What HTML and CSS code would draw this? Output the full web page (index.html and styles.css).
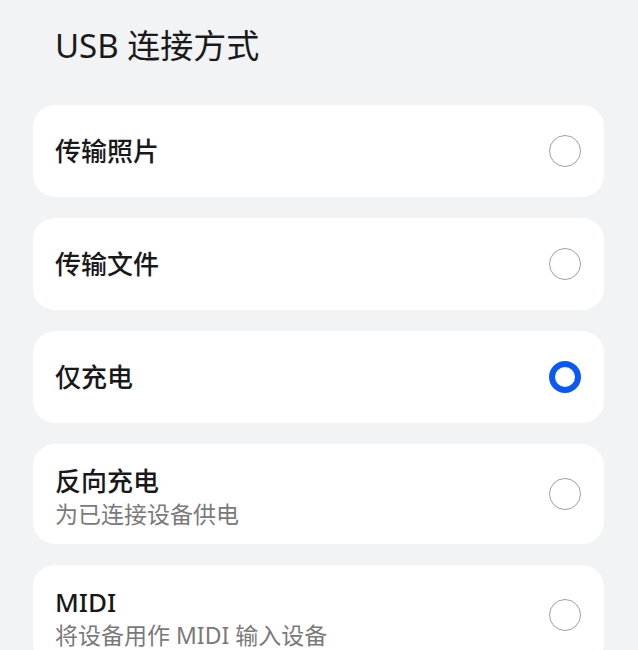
FILE: index.html
```html
<!DOCTYPE html>
<html lang="zh-CN">
<head>
  <meta charset="UTF-8">
  <meta name="viewport" content="width=device-width, initial-scale=1.0">
  <title>USB 连接方式</title>
  <link rel="stylesheet" href="styles.css">
</head>
<body>
  <div class="page">
    <h1 class="page-title">USB 连接方式</h1>
    <div class="option-list">
      <div class="option">
        <div class="option-text">
          <div class="option-name">传输照片</div>
        </div>
        <span class="radio"></span>
      </div>
      <div class="option">
        <div class="option-text">
          <div class="option-name">传输文件</div>
        </div>
        <span class="radio"></span>
      </div>
      <div class="option">
        <div class="option-text">
          <div class="option-name">仅充电</div>
        </div>
        <span class="radio checked"></span>
      </div>
      <div class="option two-line">
        <div class="option-text">
          <div class="option-name">反向充电</div>
          <div class="option-desc">为已连接设备供电</div>
        </div>
        <span class="radio"></span>
      </div>
      <div class="option two-line">
        <div class="option-text">
          <div class="option-name">MIDI</div>
          <div class="option-desc">将设备用作 MIDI 输入设备</div>
        </div>
        <span class="radio"></span>
      </div>
    </div>
  </div>
</body>
</html>
```

FILE: styles.css
```css
body {
  margin: 0;
  padding: 0;
  background-color: #f1f3f5;
  font-family: "Noto Sans", "Noto Sans CJK SC", sans-serif;
  color: #191919;
}

.page {
  padding: 24px 34px 0 33px;
  height: 650px;
  overflow: hidden;
  box-sizing: border-box;
}

.page-title {
  margin: 0 0 37px 0;
  padding-left: 22px;
  font-size: 33px;
  font-weight: 400;
  line-height: 44px;
  color: #1a1a1a;
}

.option-list {
  display: flex;
  flex-direction: column;
  gap: 21px;
}

.option {
  display: flex;
  align-items: center;
  justify-content: space-between;
  min-height: 92px;
  padding: 0 23px 0 22px;
  background-color: #fff;
  border-radius: 22px;
  box-sizing: border-box;
}

.option.two-line {
  min-height: 100px;
  padding-top: 20px;
  padding-bottom: 14px;
}

.option-name {
  font-size: 26px;
  font-weight: 500;
  line-height: 34px;
}

.option-desc {
  font-size: 23px;
  line-height: 32px;
  color: #7a7a7a;
}

.radio {
  width: 32px;
  height: 32px;
  border: 1.8px solid #a0a0a0;
  border-radius: 50%;
  box-sizing: border-box;
  flex-shrink: 0;
}

.two-line .radio {
  margin-top: -6px;
}

.radio.checked {
  border: 6.5px solid #0a59f7;
}
```
